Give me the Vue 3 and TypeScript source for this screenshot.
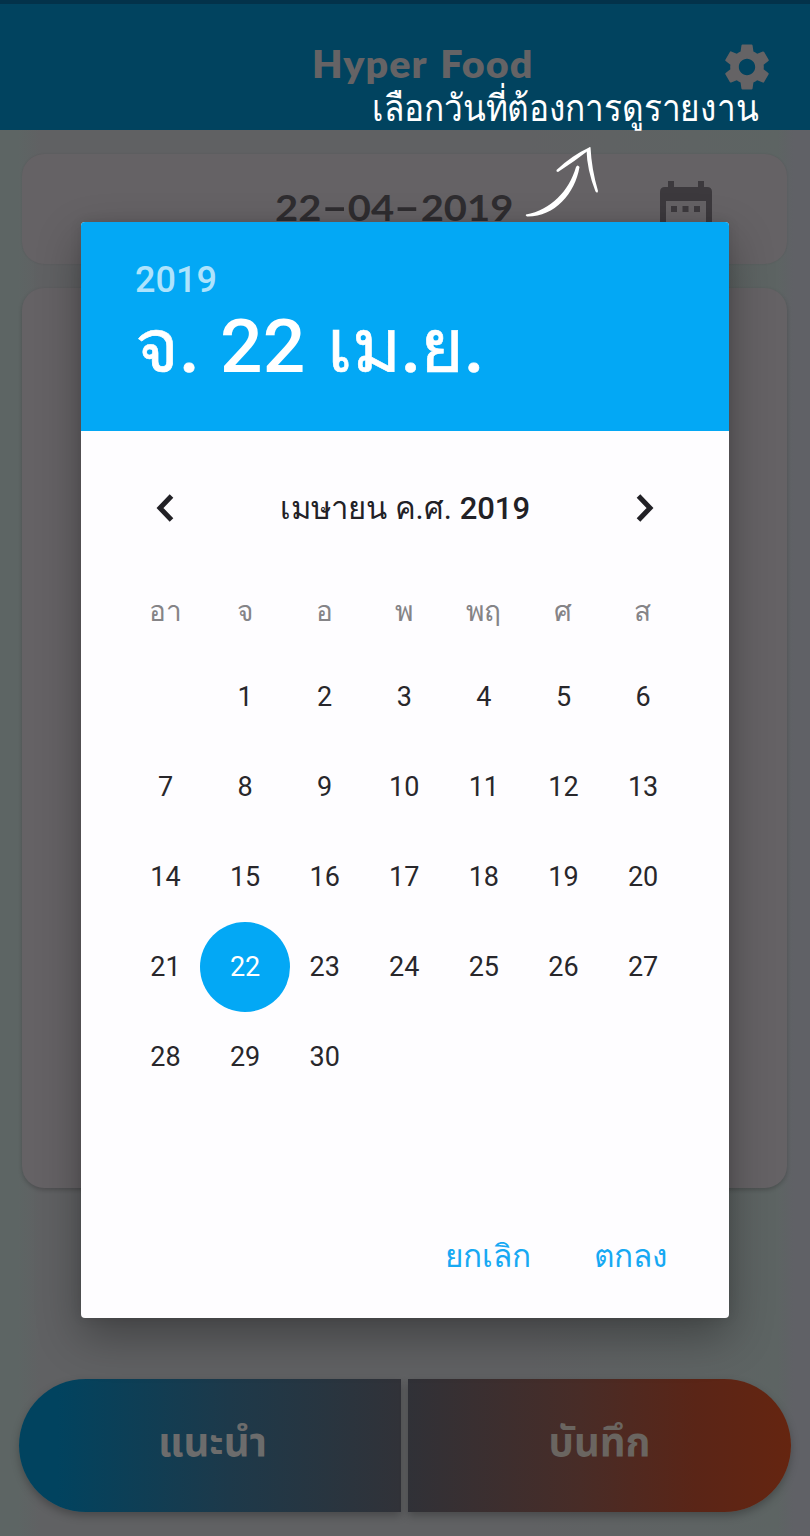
<script setup lang="ts">
const weekdays: string[] = ['อา', 'จ', 'อ', 'พ', 'พฤ', 'ศ', 'ส']
const leadingBlanks = 1
const days: number[] = Array.from({ length: 30 }, (_, i) => i + 1)
const selected = 22
</script>

<template>
  <div class="screen">
    <div class="status"></div>
    <header class="bar">
      <h1 class="brand">Hyper Food</h1>
      <svg class="gear" viewBox="0 0 24 24" width="56" height="56">
        <path fill="#656365" d="M19.14 12.94c.04-.3.06-.61.06-.94 0-.32-.02-.64-.07-.94l2.03-1.58c.18-.14.23-.41.12-.61l-1.92-3.32c-.12-.22-.37-.29-.59-.22l-2.39.96c-.5-.38-1.03-.7-1.62-.94l-.36-2.54c-.04-.24-.24-.41-.48-.41h-3.84c-.24 0-.43.17-.47.41l-.36 2.54c-.59.24-1.13.57-1.62.94l-2.39-.96c-.22-.08-.47 0-.59.22L2.74 8.87c-.12.21-.08.47.12.61l2.03 1.58c-.05.3-.09.63-.09.94s.02.64.07.94l-2.03 1.58c-.18.14-.23.41-.12.61l1.92 3.32c.12.22.37.29.59.22l2.39-.96c.5.38 1.03.7 1.62.94l.36 2.54c.05.24.24.41.48.41h3.84c.24 0 .44-.17.47-.41l.36-2.54c.59-.24 1.13-.56 1.62-.94l2.39.96c.22.08.47 0 .59-.22l1.92-3.32c.12-.22.07-.47-.12-.61l-2.01-1.58zM12 15.500c-1.930 0-3.500-1.570-3.500-3.500s1.570-3.500 3.500-3.500 3.500 1.570 3.500 3.500-1.570 3.500-3.500 3.500z" />
      </svg>
    </header>

    <section class="card date-card">
      <span class="date">22<i class="dash">-</i>04<i class="dash">-</i>2019</span>
      <svg class="cal" viewBox="0 0 52 56" width="52" height="56">
        <path fill="#3c393d" fill-rule="evenodd" d="M8 0h6v6h24V0h6v6h3q5 0 5 5v45H0V11q0-5 5-5h3zM6 20v36h40V20z" />
        <path fill="#3c393d" d="M11 25h6v6h-6zM22.500 25h6v6h-6zM34 25h6v6h-6z" />
      </svg>
    </section>
    <section class="card body-card"></section>

    <footer class="actions">
      <button class="action suggest"><span>แนะนำ</span></button>
      <button class="action save"><span>บันทึก</span></button>
    </footer>

    <div class="dialog">
      <div class="head">
        <div class="year">2019</div>
        <div class="picked"><span class="p1">จ.</span><span class="p2">22</span><span class="p3">เม.ย.</span></div>
      </div>
      <div class="month">
        <svg width="24" height="34" viewBox="0 0 24 34"><path d="M18.500 5 7 17l11.500 12" fill="none" stroke="#222126" stroke-width="5" /></svg>
        <span class="title"><span class="title-th">เมษายน ค.ศ.</span> <b>2019</b></span>
        <svg width="24" height="34" viewBox="0 0 24 34"><path d="M5.500 5 17 17 5.500 29" fill="none" stroke="#222126" stroke-width="5" /></svg>
      </div>
      <div class="week">
        <span v-for="w in weekdays" :key="w">{{ w }}</span>
      </div>
      <div class="days">
        <span v-for="b in leadingBlanks" :key="'b' + b"></span>
        <span v-for="d in days" :key="d" class="day" :class="{ on: d === selected }">{{ d }}</span>
      </div>
      <div class="buttons">
        <span class="cancel">ยกเลิก</span>
        <span class="ok">ตกลง</span>
      </div>
    </div>

    <div class="hint">เลือกวันที่ต้องการดูรายงาน</div>
    <svg class="arrow" viewBox="0 0 80 74" width="80" height="74">
      <path fill="#fff" d="M1 68.500C26 64 44 45 51 21q1.500-3 3.500 0C50 48 29 71 2 70.500q-2-1-1-2z" />
      <path fill="#fff" d="M31.500 24Q46 10 65 1q.5 1.500-1 3-14 11-31 22-2 0-1.500-2z" />
      <path fill="#fff" d="M65.500 1q1 22 7.500 44-.5 3-2.500.500Q62 24 61.500 4z" />
    </svg>
  </div>
</template>

<style>
body { margin: 0; background: #5f6263; }
</style>

<style scoped>
.screen {
  position: relative;
  width: 810px;
  height: 1536px;
  overflow: hidden;
  display: flex;
  flex-direction: column;
  font-family: Roboto, "Noto Sans", sans-serif;
  background: linear-gradient(90deg, #5d6564 0, #5d6564 18px, #606163 40px, #606163 65%, #5d6463 96%, #606166 98%);
}
.status { height: 4px; background: #03324a; flex: none; }
.bar {
  height: 126px;
  flex: none;
  display: flex;
  align-items: center;
  background: #01435f;
}
.brand {
  margin: 0 0 0 312px;
  width: 222px;
  font: 800 37px/50px Lato, sans-serif;
  letter-spacing: 1px;
  word-spacing: 3px;
  transform: scaleX(1.065);
  transform-origin: 0 50%;
  padding-bottom: 6px;
  color: #656365;
  white-space: nowrap;
}
.gear { margin-left: 185px; }
.card {
  margin-left: 22px;
  width: 765px;
  flex: none;
  border-radius: 22px;
  background: #656265;
  box-shadow: 0 2px 4px rgba(0, 0, 0, 0.2);
}
.date-card {
  margin-top: 24px;
  height: 110px;
  display: flex;
  align-items: center;
  box-shadow: 0 0 2px rgba(0, 0, 0, 0.1);
}
.date {
  margin-left: 253px;
  width: 385px;
  font: 700 37px/50px Lato, sans-serif;
  transform: scaleX(1.080);
  transform-origin: 0 50%;
  padding-bottom: 4px;
  color: #2f2d30;
  white-space: nowrap;
}
.dash {
  display: inline-block;
  width: 24.500px;
  text-align: center;
  font-style: normal;
  transform: translateY(-1px) scaleX(1.800);
}
.body-card { margin-top: 24px; height: 900px; }
.actions {
  margin: 191px 19px 0;
  display: grid;
  grid-template-columns: 382px 383px;
  gap: 7px;
}
.action {
  height: 133px;
  border: 0;
  padding: 0 0 3px;
  display: flex;
  align-items: center;
  justify-content: center;
  font: 700 40px/50px "Noto Sans Thai", "Open Sans", sans-serif;
  color: #6c6c6c;
  box-shadow: 0 4px 8px rgba(0, 0, 0, 0.25);
}
.suggest {
  padding-left: 5px;
  border-radius: 67px 0 0 67px;
  background: linear-gradient(90deg, #01435f 10%, #1d394a 55%, #313238 100%);
}
.save {
  border-radius: 0 67px 67px 0;
  background: linear-gradient(90deg, #303137, #482c27 45%, #5a2517 75%, #652510);
  color: #6a6560;
}
.dialog {
  position: absolute;
  left: 81px;
  top: 222px;
  width: 648px;
  height: 1096px;
  border-radius: 4px;
  overflow: hidden;
  background: #fefdff;
  box-shadow: 0 18px 45px rgba(0, 0, 0, 0.32), 0 0 12px rgba(0, 0, 0, 0.1);
}
.head { height: 209px; box-sizing: border-box; padding: 37px 54px 0; background: #03a8f5; color: #fff; }
.year { font-size: 36px; font-weight: 500; line-height: 42px; color: #aee3fc; }
.picked { display: flex; font-size: 75px; font-weight: 500; line-height: 91px; white-space: nowrap; }
.p1 { width: 85px; }
.p2 { width: 107px; }
.p1, .p3 { -webkit-text-stroke: 0.600px #fff; }
.p3 { letter-spacing: -0.800px; }
.p1, .p3, .title-th, .week, .buttons { font-family: Roboto, "Liberation Serif", serif; }
.month {
  height: 72px;
  margin: 41px 72px 0;
  display: flex;
  align-items: center;
  justify-content: space-between;
}
.title { font-size: 31px; color: #222126; white-space: nowrap; padding-bottom: 1px; }
.title b { font-weight: 500; }
.week, .days {
  margin: 0 44.500px;
  display: grid;
  grid-template-columns: repeat(7, 79.600px);
  text-align: center;
}
.week { margin-top: 46px; height: 43px; line-height: 43px; font-size: 28px; color: #858487; }
.days { margin-top: 19px; grid-auto-rows: 90px; }
.day { width: 90px; height: 90px; line-height: 90px; margin-left: -5px; font-size: 27px; color: #28272b; border-radius: 50%; }
.day.on { background: #03a8f5; color: #fff; }
.buttons {
  margin: 131px 62px 0 0;
  display: flex;
  justify-content: flex-end;
  gap: 63px;
  font-size: 31.500px;
  line-height: 48px;
  color: #17a9f3;
  white-space: nowrap;
}
.hint {
  position: absolute;
  left: 372px;
  top: 84px;
  font: 37px/50px "Liberation Serif", serif;
  transform: scaleX(0.902);
  transform-origin: 0 50%;
  color: #fff;
  white-space: nowrap;
}
.arrow { position: absolute; left: 525px; top: 146px; }
</style>
